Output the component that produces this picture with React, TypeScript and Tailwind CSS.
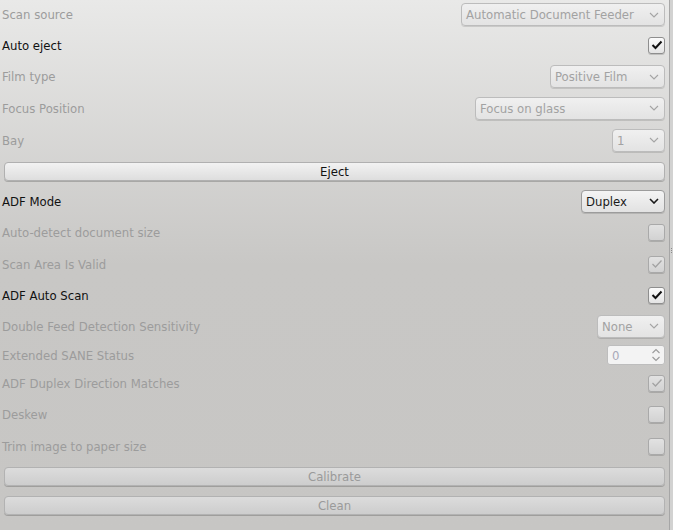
import React from "react";

const font = { fontFamily: '"DejaVu Sans Condensed", "DejaVu Sans", "Liberation Sans", sans-serif' };

function Chevron({ enabled }: { enabled?: boolean }) {
  return (
    <svg width="10" height="6" viewBox="0 0 10 6" className="shrink-0">
      <path d="M1 1 L5 5 L9 1" fill="none" stroke={enabled ? "#1a1a1a" : "#a4a4a4"} strokeWidth={enabled ? 1.6 : 1.1} />
    </svg>
  );
}

function Combo({ value, width, enabled }: { value: string; width: number; enabled?: boolean }) {
  return (
    <div
      className={
        "flex h-[23px] items-center justify-between rounded-[4px] border pl-[4px] pr-[5px] shadow-[0_1px_0_rgba(0,0,0,0.12)] " +
        (enabled
          ? "border-[#9c9c9c] bg-gradient-to-b from-[#f4f4f4] to-[#e2e2e2] text-[#1a1a1a]"
          : "border-[#bcbcbc] bg-gradient-to-b from-[#f0f0f0] to-[#e3e3e3] text-[#a2a2a2]")
      }
      style={{ width }}
    >
      <span className="text-[13px] leading-none">{value}</span>
      <Chevron enabled={enabled} />
    </div>
  );
}

function Check({ checked, enabled }: { checked?: boolean; enabled?: boolean }) {
  return (
    <div
      className={
        "flex h-[17px] w-[17px] items-center justify-center rounded-[3px] border shadow-[0_1px_0_rgba(0,0,0,0.15)] " +
        (enabled
          ? "border-[#8e8e8e] bg-gradient-to-b from-[#fbfbfb] to-[#e4e4e4]"
          : "border-[#a9a9a9] bg-gradient-to-b from-[#e2e2e2] to-[#d2d2d2]")
      }
    >
      {checked && (
        <svg width="12" height="10" viewBox="0 0 12 10">
          <path
            d="M1.5 5 L4.5 8 L10.5 1.5"
            fill="none"
            stroke={enabled ? "#111" : "#a3a3a3"}
            strokeWidth={enabled ? 2 : 1.3}
          />
        </svg>
      )}
    </div>
  );
}

function Row({ h, label, enabled, children }: { h: number; label: string; enabled?: boolean; children: React.ReactNode }) {
  return (
    <div className="flex items-center justify-between pl-[2px] pr-[4px]" style={{ height: h }}>
      <span className={"text-[13px] leading-none " + (enabled ? "text-[#111]" : "text-[#9c9c9c]")}>{label}</span>
      {children}
    </div>
  );
}

function Button({ label, enabled }: { label: string; enabled?: boolean }) {
  return (
    <div
      className={
        "mx-[4px] flex h-[19px] items-center justify-center rounded-[4px] border shadow-[0_1px_0_rgba(0,0,0,0.2)] " +
        (enabled
          ? "border-[#b0b0b0] bg-gradient-to-b from-[#f2f2f2] to-[#dedede] text-[#111]"
          : "border-[#b2b2b2] bg-gradient-to-b from-[#dcdcdc] to-[#cdcdcd] text-[#9a9a9a]")
      }
    >
      <span className="text-[13px] leading-none">{label}</span>
    </div>
  );
}

export default function App() {
  return (
    <div
      className="flex h-[530px] w-[673px] overflow-hidden bg-gradient-to-b from-[#e9e9e8] via-[#c8c7c5] via-50% to-[#c7c6c4]"
      style={font}
    >
      <div className="w-[669px] shrink-0">
        <Row h={29} label="Scan source">
          <Combo value="Automatic Document Feeder" width={204} />
        </Row>
        <Row h={32} label="Auto eject" enabled>
          <Check checked enabled />
        </Row>
        <Row h={31} label="Film type">
          <Combo value="Positive Film" width={115} />
        </Row>
        <Row h={32} label="Focus Position">
          <Combo value="Focus on glass" width={190} />
        </Row>
        <Row h={32} label="Bay">
          <Combo value="1" width={53} />
        </Row>
        <div className="h-[30px] pt-[6px]">
          <Button label="Eject" enabled />
        </div>
        <Row h={30} label="ADF Mode" enabled>
          <Combo value="Duplex" width={84} enabled />
        </Row>
        <Row h={32} label="Auto-detect document size">
          <Check />
        </Row>
        <Row h={32} label="Scan Area Is Valid">
          <Check checked />
        </Row>
        <Row h={30} label="ADF Auto Scan" enabled>
          <Check checked enabled />
        </Row>
        <Row h={32} label="Double Feed Detection Sensitivity">
          <Combo value="None" width={68} />
        </Row>
        <Row h={26} label="Extended SANE Status">
          <div className="flex h-[20px] w-[58px] items-center justify-between rounded-[3px] border border-[#bdbdbd] bg-[#f3f3f3] pl-[4px] pr-[3px]">
            <span className="text-[13px] leading-none text-[#a8a8b8]">0</span>
            <svg width="10" height="16" viewBox="0 0 10 16">
              <path d="M1.5 6 L5 2.5 L8.5 6" fill="none" stroke="#9a9a9a" strokeWidth="1.1" />
              <path d="M1.5 10 L5 13.5 L8.5 10" fill="none" stroke="#9a9a9a" strokeWidth="1.1" />
            </svg>
          </div>
        </Row>
        <Row h={30} label="ADF Duplex Direction Matches">
          <Check checked />
        </Row>
        <Row h={32} label="Deskew">
          <Check />
        </Row>
        <Row h={32} label="Trim image to paper size">
          <Check />
        </Row>
        <div className="h-[29px] pt-[5px]">
          <Button label="Calibrate" />
        </div>
        <div className="h-[29px] pt-[5px]">
          <Button label="Clean" />
        </div>
      </div>
      <div className="w-[1px] shrink-0 bg-[#a6a6a6]" />
      <div className="flex flex-1 flex-col items-center justify-center bg-[#d2d2d1]">
        <div className="mb-[30px] flex flex-col gap-[1px]">
          <div className="h-[1px] w-[1px] bg-[#8a8a8a]" />
          <div className="h-[1px] w-[1px] bg-[#8a8a8a]" />
          <div className="h-[1px] w-[1px] bg-[#8a8a8a]" />
        </div>
      </div>
    </div>
  );
}
